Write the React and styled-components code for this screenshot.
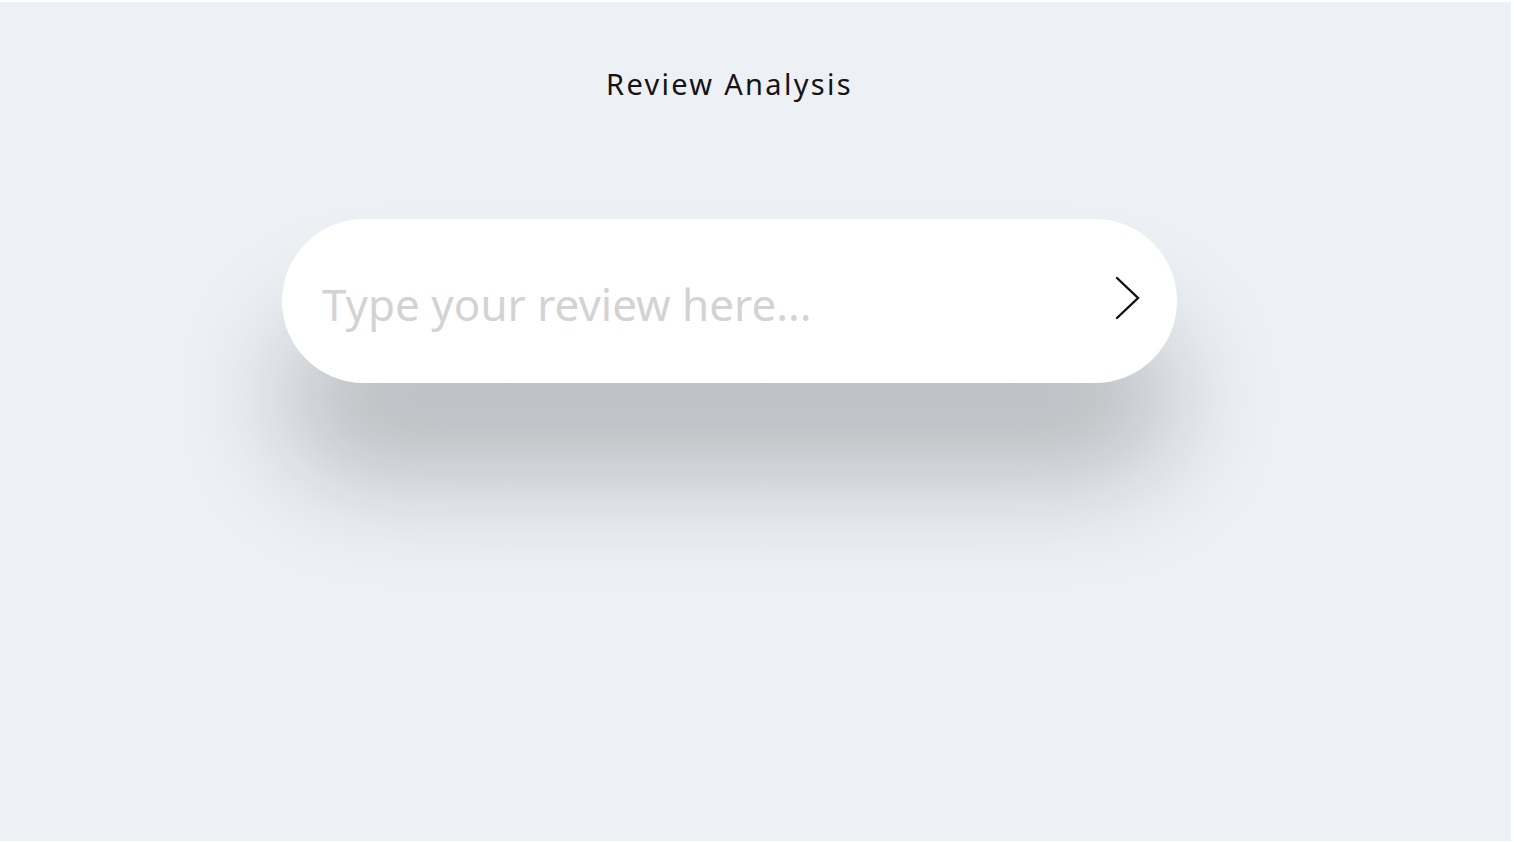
import styled, { createGlobalStyle } from 'styled-components';

const GlobalStyle = createGlobalStyle`
  * {
    box-sizing: border-box;
  }
  body {
    margin: 0;
    background: #ffffff;
    font-family: 'Noto Sans', 'Open Sans', sans-serif;
  }
`;

export default function App() {
  return (
    <>
      <GlobalStyle />
      <Page>
        <Title>Review Analysis</Title>
        <SearchBar onSubmit={(e) => e.preventDefault()}>
          <ReviewInput placeholder="Type your review here..." />
          <SendButton type="submit" aria-label="Analyse">
            <svg width="26" height="44" viewBox="0 0 26 44" fill="none">
              <path
                d="M2 2 L23 22 L2 42"
                stroke="#111111"
                strokeWidth="2.4"
                strokeLinecap="round"
                strokeLinejoin="miter"
              />
            </svg>
          </SendButton>
        </SearchBar>
      </Page>
    </>
  );
}

const Page = styled.main`
  margin-top: 2px;
  width: calc(100vw - 3px);
  height: 839px;
  background-color: #edf0f5;
  display: flex;
  flex-direction: column;
  align-items: center;
  padding: 62px 52px 0 0;
`;

const Title = styled.h1`
  margin: 0;
  font-family: 'Noto Sans', sans-serif;
  font-weight: 400;
  font-size: 29px;
  letter-spacing: 2.3px;
  color: #141414;
`;

const SearchBar = styled.form`
  margin-top: 116px;
  width: 895px;
  height: 164px;
  border-radius: 82px;
  background: #ffffff;
  display: flex;
  align-items: center;
  padding: 0 36px 0 40px;
  box-shadow: 0 95px 110px rgba(0, 0, 0, 0.22);
`;

const ReviewInput = styled.input`
  flex: 1;
  border: none;
  outline: none;
  background: transparent;
  font-family: 'Noto Sans', sans-serif;
  font-size: 44px;
  color: #333;
  padding: 0;
  margin-top: 6px;

  &::placeholder {
    color: #d3d3d5;
  }
`;

const SendButton = styled.button`
  border: none;
  background: none;
  padding: 0;
  margin-bottom: 6px;
  display: flex;
  align-items: center;
  cursor: pointer;
`;
